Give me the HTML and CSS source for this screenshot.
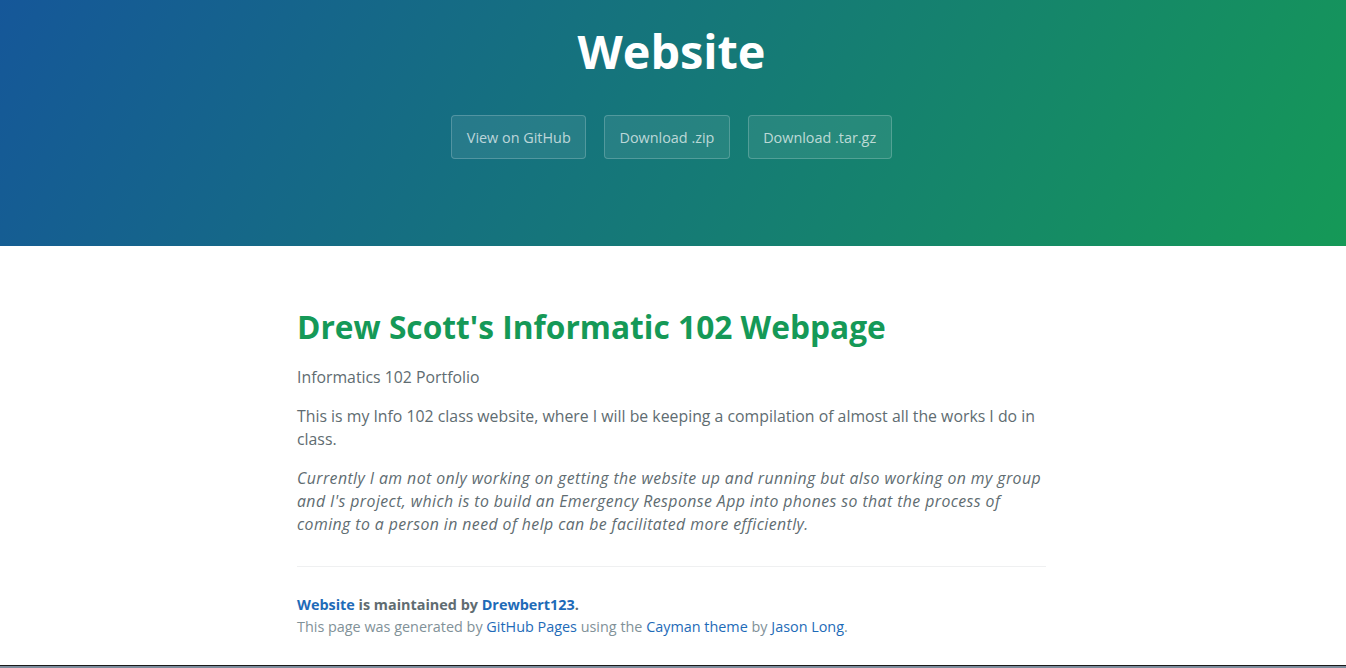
FILE: index.html
```html
<!DOCTYPE html>
<html lang="en">
<head>
<meta charset="UTF-8">
<title>Website</title>
<link rel="stylesheet" href="styles.css">
</head>
<body>
<section class="page-header">
  <h1 class="project-name">Website</h1>
  <div class="btn-row">
    <a class="btn" href="#">View on GitHub</a>
    <a class="btn" href="#">Download .zip</a>
    <a class="btn" href="#">Download .tar.gz</a>
  </div>
</section>
<section class="main-content">
  <h1 class="page-title">Drew Scott's Informatic 102 Webpage</h1>
  <p>Informatics 102 Portfolio</p>
  <p>This is my Info 102 class website, where I will be keeping a compilation of almost all the works I do in class.</p>
  <p class="note"><em>Currently I am not only working on getting the website up and running but also working on my group and I's project, which is to build an Emergency Response App into phones so that the process of coming to a person in need of help can be facilitated more efficiently.</em></p>
  <footer class="site-footer">
    <span class="site-footer-owner"><a href="#">Website</a> is maintained by <a href="#">Drewbert123</a>.</span>
    <span class="site-footer-credits">This page was generated by <a href="#">GitHub Pages</a> using the <a href="#">Cayman theme</a> by <a href="#">Jason Long</a>.</span>
  </footer>
</section>
<div class="taskbar-edge"></div>
</body>
</html>
```

FILE: styles.css
```css
* { box-sizing: border-box; }
html, body { margin: 0; padding: 0; }
body {
  font-family: "Open Sans", "Helvetica Neue", Arial, sans-serif;
  font-size: 14.4px;
  line-height: 1.5;
  color: #606c71;
  background: #fff;
  overflow: hidden;
}
a { text-decoration: none; color: #1e6bb8; }

.page-header {
  height: 246px;
  padding-top: 16px;
  padding-right: 3px;
  text-align: center;
  color: #fff;
  background-color: #159957;
  background-image: linear-gradient(120deg, #155799, #159957);
}
.project-name {
  margin: 0;
  font-size: 46.8px;
  line-height: 70px;
  font-weight: 700;
}
.btn-row {
  margin-top: 29px;
  display: flex;
  justify-content: center;
  gap: 18px;
}
.btn {
  display: inline-block;
  color: rgba(255, 255, 255, 0.7);
  background-color: rgba(255, 255, 255, 0.08);
  border: 1px solid rgba(255, 255, 255, 0.2);
  border-radius: 4px;
  padding: 11px 14.4px 10px;
  font-size: 14.4px;
  line-height: 21px;
}

.main-content {
  width: 749px;
  margin-left: calc(50% - 376px);
  font-size: 15.84px;
}
.page-title {
  margin: 63px 0 21px;
  font-size: 31.7px;
  line-height: 36px;
  font-weight: 700;
  color: #159957;
}
.main-content p {
  margin: 0 0 16px;
  line-height: 23px;
}
.main-content p.note { margin-bottom: 0; }
.note em { letter-spacing: 0.42px; }
.site-footer {
  margin-top: 30px;
  padding-top: 27px;
  border-top: 1px solid #eff0f1;
  font-size: 14.4px;
  line-height: 21.6px;
}
.site-footer-owner {
  display: block;
  font-weight: 700;
}
.site-footer-credits {
  display: block;
  color: #819198;
}

.taskbar-edge {
  position: fixed;
  left: 0;
  right: 0;
  bottom: 0;
  height: 3px;
  border-top: 1px solid #1a1a1a;
  background: #7d8c9c;
}
```
